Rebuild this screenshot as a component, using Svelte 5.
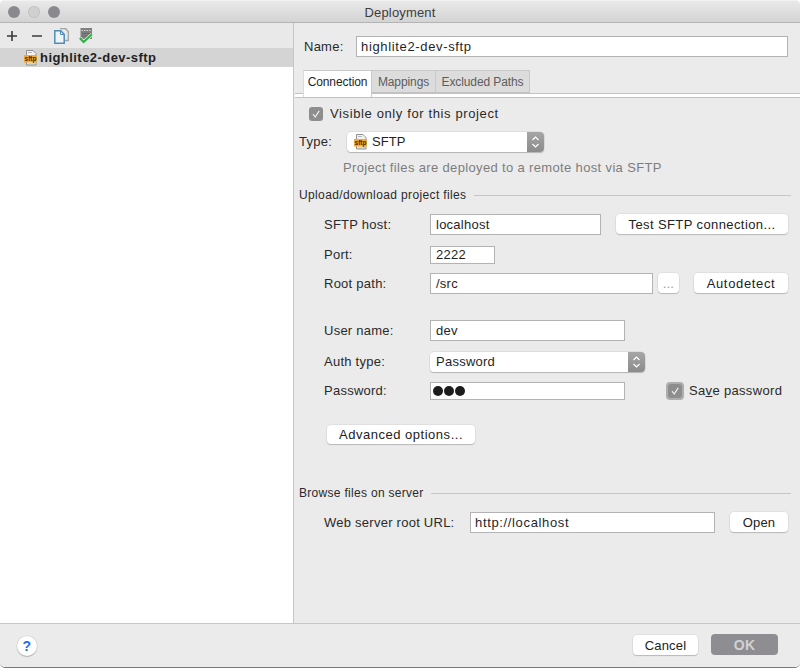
<script>
  const dots = [0, 1, 2];
</script>

{#snippet sftp()}
  <svg class="sftp" width="14" height="16" viewBox="0 0 14 16">
    <path d="M2.500 0.500h6.500l3 3v11.500h-9.500z" fill="#f2f2f2" stroke="#8f8f8f" />
    <path d="M4 2.500h4M4 14h7" stroke="#b5b5b5" />
    <rect x="0" y="5" width="13" height="7.500" fill="#f2a93b" />
    <text x="6.500" y="11" class="sftp-text">sftp</text>
  </svg>
{/snippet}

{#snippet updown()}
  <span class="stepper">
    <svg width="9" height="14" viewBox="0 0 9 14">
      <path d="M1.500 5 4.500 2 7.500 5M1.500 9 4.500 12 7.500 9" fill="none" stroke="#fff" stroke-width="1.200" />
    </svg>
  </span>
{/snippet}

{#snippet check()}
  <svg width="14" height="14" viewBox="0 0 14 14">
    <rect width="14" height="14" rx="3" fill="#8e8e8e" />
    <path d="M4 7.200 6.200 10 10.200 3.800" fill="none" stroke="#eee" stroke-width="1.200" />
  </svg>
{/snippet}

<div class="window">
  <header class="titlebar">
    <div class="lights">
      <span class="light"></span>
      <span class="light off"></span>
      <span class="light"></span>
    </div>
    <span class="title">Deployment</span>
  </header>

  <div class="main">
    <aside class="side">
      <div class="toolbar">
        <svg width="12" height="12" viewBox="0 0 12 12" class="t-plus"><path d="M6 1v10M1 6h10" stroke="#3a3a3a" stroke-width="1.600" /></svg>
        <svg width="12" height="12" viewBox="0 0 12 12" class="t-minus"><path d="M1 6h10" stroke="#3a3a3a" stroke-width="1.600" /></svg>
        <svg width="15" height="16" viewBox="0 0 15 16" class="t-copy">
          <path d="M6 0.700h5.500l2.800 2.800V12.500H11" fill="none" stroke="#a3a3a3" stroke-width="1.300" />
          <path d="M0.800 2.800h6l3.400 3.400v9H0.800z" fill="#eef3f7" stroke="#4f8db5" stroke-width="1.500" />
          <path d="M6.500 3v3.500H10" fill="none" stroke="#4f8db5" />
        </svg>
        <svg width="14" height="16" viewBox="0 0 14 16" class="t-check">
          <rect x="1.500" y="0" width="11.500" height="11" fill="#808080" />
          <path d="M2.500 2.500h9.500" stroke="#d6d6d6" stroke-dasharray="1.500 1" />
          <path d="M3 5.500h8M3 8h8" stroke="#686868" />
          <path d="M0.800 10 4.600 14 12.800 6.500" fill="none" stroke="#e9e9e9" stroke-width="3.600" />
          <path d="M0.800 10 4.600 14 12.800 6.500" fill="none" stroke="#2fb344" stroke-width="2.200" />
        </svg>
      </div>
      <div class="item">
        {@render sftp()}
        <span>highlite2-dev-sftp</span>
      </div>
    </aside>

    <section class="pane">
      <div class="name-row">
        <span class="name-label">Name:</span>
        <span class="input grow h21 ls65 tight">highlite2-dev-sftp</span>
      </div>

      <div class="tabs">
        <span class="tab active w69">Connection</span>
        <span class="tab w64">Mappings</span>
        <span class="tab w94">Excluded Paths</span>
      </div>
      <div class="tab-rule"></div>

      <div class="visible">
        {@render check()}
        <span class="ls55">Visible only for this project</span>
      </div>

      <div class="type-row">
        <span class="type-label">Type:</span>
        <span class="select w197">
          <span class="select-text">{@render sftp()}<span class="sftp-name">SFTP</span></span>
          {@render updown()}
        </span>
      </div>
      <p class="hint">Project files are deployed to a remote host via SFTP</p>

      <div class="legend l-upload"><span>Upload/download project files</span><i></i></div>

      <div class="row r-host">
        <span class="label">SFTP host:</span>
        <span class="input w171 h21">localhost</span>
        <button class="btn w172 ml15 ls40">Test SFTP connection...</button>
      </div>
      <div class="row r-port">
        <span class="label">Port:</span>
        <span class="input w65 h17">2222</span>
      </div>
      <div class="row r-root">
        <span class="label">Root path:</span>
        <span class="input w223 h21">/src</span>
        <button class="btn w21 ml5 dots">...</button>
        <button class="btn w94 ml15 ls65">Autodetect</button>
      </div>
      <div class="row r-user">
        <span class="label">User name:</span>
        <span class="input w195 h21">dev</span>
      </div>
      <div class="row r-auth">
        <span class="label">Auth type:</span>
        <span class="select w215">
          <span class="select-text plain">Password</span>
          {@render updown()}
        </span>
      </div>
      <div class="row r-pass">
        <span class="label">Password:</span>
        <span class="input w195 h17 pw">
          {#each dots as d (d)}<i class="dot"></i>{/each}
        </span>
        <span class="focus">{@render check()}</span>
        <span class="save">Sa<u>v</u>e password</span>
      </div>
      <button class="btn adv">Advanced options...</button>

      <div class="legend l-browse"><span>Browse files on server</span><i></i></div>
      <div class="row r-web">
        <span class="label wide">Web server root URL:</span>
        <span class="input w245 h21 ls65 tight">http://localhost</span>
        <button class="btn w58 ml15">Open</button>
      </div>
    </section>
  </div>

  <footer class="footer">
    <span class="help">?</span>
    <button class="btn cancel">Cancel</button>
    <button class="btn ok">OK</button>
  </footer>
</div>

<style>
  :global(body) {
    margin: 0;
    background: #fff;
  }
  .window {
    width: 800px;
    height: 668px;
    display: flex;
    flex-direction: column;
    overflow: hidden;
    font: 13px/16px "Liberation Sans", Arial, sans-serif;
    letter-spacing: 0.25px;
    color: #2a2a2a;
    background: #ebebeb;
    border-radius: 5px;
    box-sizing: border-box;
    border-bottom: 1px solid #777;
  }
  .titlebar {
    height: 23px;
    flex: none;
    box-sizing: border-box;
    display: flex;
    align-items: center;
    justify-content: center;
    position: relative;
    background: linear-gradient(#e9e9e9, #d3d3d3);
    border-bottom: 1px solid #b4b4b4;
    border-top: 1px solid #f2f2f2;
    color: #3d3d3d;
  }
  .title {
    margin-top: 2px;
    letter-spacing: 0.15px;
  }
  .lights {
    position: absolute;
    left: 8px;
    top: 5px;
    display: flex;
    gap: 8px;
  }
  .light {
    width: 12px;
    height: 12px;
    border-radius: 50%;
    background: #8a8a8e;
  }
  .light.off {
    background: #d0d0d0;
    box-shadow: inset 0 0 0 1px #c4c4c4;
  }
  .main {
    flex: 1;
    display: flex;
    min-height: 0;
  }
  .side {
    width: 294px;
    flex: none;
    box-sizing: border-box;
    background: #fff;
    border-right: 1px solid #c6c6c6;
  }
  .toolbar {
    height: 25px;
    background: #e9e9e9;
    display: flex;
    align-items: center;
    padding-left: 6px;
  }
  .t-minus { margin-left: 13px; }
  .t-copy { margin-left: 11px; margin-top: 0; }
  .t-check { margin-left: 10px; margin-top: 1px; }
  .item {
    height: 19px;
    background: #d4d4d4;
    display: flex;
    align-items: center;
    padding-left: 24px;
    font-weight: 700;
    color: #1f1f1f;
    gap: 2px;
    letter-spacing: 0.45px;
  }
  .sftp { flex: none; }
  .sftp-text {
    font: 700 6.500px "Liberation Sans", sans-serif;
    text-anchor: middle;
    fill: #4a2c00;
    letter-spacing: 0;
  }
  .pane {
    flex: 1;
    min-width: 0;
    padding-top: 13px;
  }
  .name-row {
    display: flex;
    align-items: center;
    padding: 0 12px 0 10px;
    height: 21px;
  }
  .name-label { width: 52px; flex: none; }
  .input {
    box-sizing: border-box;
    display: flex;
    align-items: center;
    background: #fff;
    border: 1px solid #b3b3b3;
    padding-left: 5px;
    flex: none;
    color: #1f1f1f;
  }
  .tight { padding-left: 4px; }
  .ls65 { letter-spacing: 0.65px; }
  .ls55 { letter-spacing: 0.62px; }
  .ls40 { letter-spacing: 0.4px; }
  .grow { flex: 1; }
  .h21 { height: 21px; }
  .h17 { height: 18px; }
  .w171 { width: 171px; }
  .w65 { width: 65px; }
  .w223 { width: 223px; }
  .w195 { width: 195px; }
  .w245 { width: 245px; }
  .w197 { width: 197px; }
  .w215 { width: 215px; }
  .w172 { width: 172px; }
  .w21 { width: 21px; }
  .w94 { width: 94px; }
  .w58 { width: 58px; }
  .w69 { width: 69px; }
  .w64 { width: 64px; }
  .ml15 { margin-left: 15px; }
  .ml5 { margin-left: 5px; }
  .tabs {
    display: flex;
    margin: 13px 0 0 9px;
    height: 23px;
    position: relative;
    z-index: 1;
  }
  .tab {
    box-sizing: border-box;
    height: 23px;
    display: flex;
    align-items: center;
    justify-content: center;
    background: #dcdcdc;
    border: 1px solid #c9c9c9;
    border-left: 0;
    border-bottom: 1px solid #c2c2c2;
    font-size: 12px;
    color: #5c5c5c;
    letter-spacing: -0.1px;
  }
  .tab.active {
    background: #fff;
    color: #1f1f1f;
    height: 27px;
    padding-bottom: 4px;
    border-bottom: 0;
    border-left: 1px solid #dcdcdc;
  }
  .tab-rule {
    height: 3px;
    background: #fff;
    border-top: 1px solid #c2c2c2;
    border-bottom: 1px solid #c2c2c2;
    margin-left: 1px;
    background-clip: padding-box;
  }
  .visible {
    display: flex;
    align-items: center;
    gap: 7px;
    margin: 8px 0 0 15px;
    height: 16px;
  }
  .type-row {
    display: flex;
    align-items: center;
    margin: 10px 0 0 5px;
    height: 20px;
  }
  .type-label { width: 48px; flex: none; }
  .select {
    box-sizing: border-box;
    height: 20px;
    display: flex;
    background: #fff;
    border-radius: 4px;
    box-shadow: 0 1px 1px #b5b5b5, 0 0 0 0.500px #d2d2d2;
    flex: none;
    overflow: hidden;
  }
  .select-text {
    flex: 1;
    display: flex;
    align-items: center;
    gap: 4px;
    padding-left: 7px;
    color: #1f1f1f;
  }
  .sftp-name { letter-spacing: 0.1px; }
  .select-text.plain { padding-left: 6px; }
  .stepper {
    width: 17px;
    background: linear-gradient(#a6a6a6, #8b8b8b);
    display: flex;
    align-items: center;
    justify-content: center;
  }
  .hint {
    margin: 8px 0 0 49px;
    color: #7d7d7d;
    height: 16px;
    letter-spacing: 0.35px;
  }
  .legend {
    display: flex;
    align-items: center;
    margin-left: 5px;
    margin-right: 9px;
    gap: 7px;
    font-size: 12px;
    letter-spacing: 0.37px;
    height: 16px;
  }
  .legend i {
    flex: 1;
    height: 1px;
    background: #c6c6c6;
    margin-top: 1px;
  }
  .l-upload { margin-top: 11px; }
  .l-browse { margin-top: 41px; letter-spacing: 0.3px; }
  .row {
    display: flex;
    align-items: center;
    padding-left: 30px;
  }
  .label { width: 106px; flex: none; }
  .label.wide { width: 146px; }
  .r-host { margin-top: 11px; height: 21px; }
  .r-port { margin-top: 11px; height: 18px; }
  .r-root { margin-top: 9px; height: 21px; }
  .r-user { margin-top: 26px; height: 21px; }
  .r-auth { margin-top: 11px; height: 20px; }
  .r-pass { margin-top: 9px; height: 19px; }
  .r-web { margin-top: 11px; height: 21px; }
  .btn {
    box-sizing: border-box;
    height: 20px;
    padding: 1px 0 0;
    flex: none;
    border: 0;
    border-radius: 4px;
    background: #fff;
    box-shadow: 0 1px 1px #b9b9b9, 0 0 0 0.500px #d6d6d6;
    font: inherit;
    letter-spacing: 0.15px;
    color: #222;
  }
  .btn.ls65 { letter-spacing: 0.65px; }
  .btn.ls40 { letter-spacing: 0.4px; }
  .r-host .btn, .r-root .btn, .r-web .btn { align-self: flex-start; }
  .dots { color: #9a9a9a; }
  .adv {
    display: block;
    width: 148px;
    margin: 25px 0 0 33px;
    height: 19px;
    padding: 0;
    letter-spacing: 0.52px;
  }
  .pw { gap: 1px; padding-left: 2px; }
  .dot {
    width: 10px;
    height: 10px;
    border-radius: 50%;
    background: #1c1c1c;
  }
  .focus {
    margin-left: 41px;
    width: 18px;
    height: 18px;
    flex: none;
    border-radius: 4px;
    background: #aeaeae;
    display: flex;
    align-items: center;
    justify-content: center;
  }
  .save { margin-left: 5px; white-space: nowrap; letter-spacing: 0.33px; }
  .footer {
    height: 44px;
    flex: none;
    box-sizing: border-box;
    border-top: 1px solid #c6c6c6;
    display: flex;
    align-items: flex-start;
    background: #ebebeb;
  }
  .help {
    width: 20px;
    height: 20px;
    margin: 12px 0 0 17px;
    border-radius: 50%;
    background: #fff;
    box-shadow: 0 1px 1px #b0b0b0, 0 0 0 0.500px #d0d0d0;
    color: #1c6ff0;
    font-weight: 700;
    font-size: 14px;
    line-height: 20px;
    text-align: center;
  }
  .cancel {
    margin: 11px 0 0 auto;
    width: 65px;
  }
  .ok {
    margin: 10px 22px 0 13px;
    width: 67px;
    height: 21px;
    background: #8e8e92;
    color: #d2d2d2;
    font-weight: 700;
    font-size: 14px;
    box-shadow: none;
  }
</style>
